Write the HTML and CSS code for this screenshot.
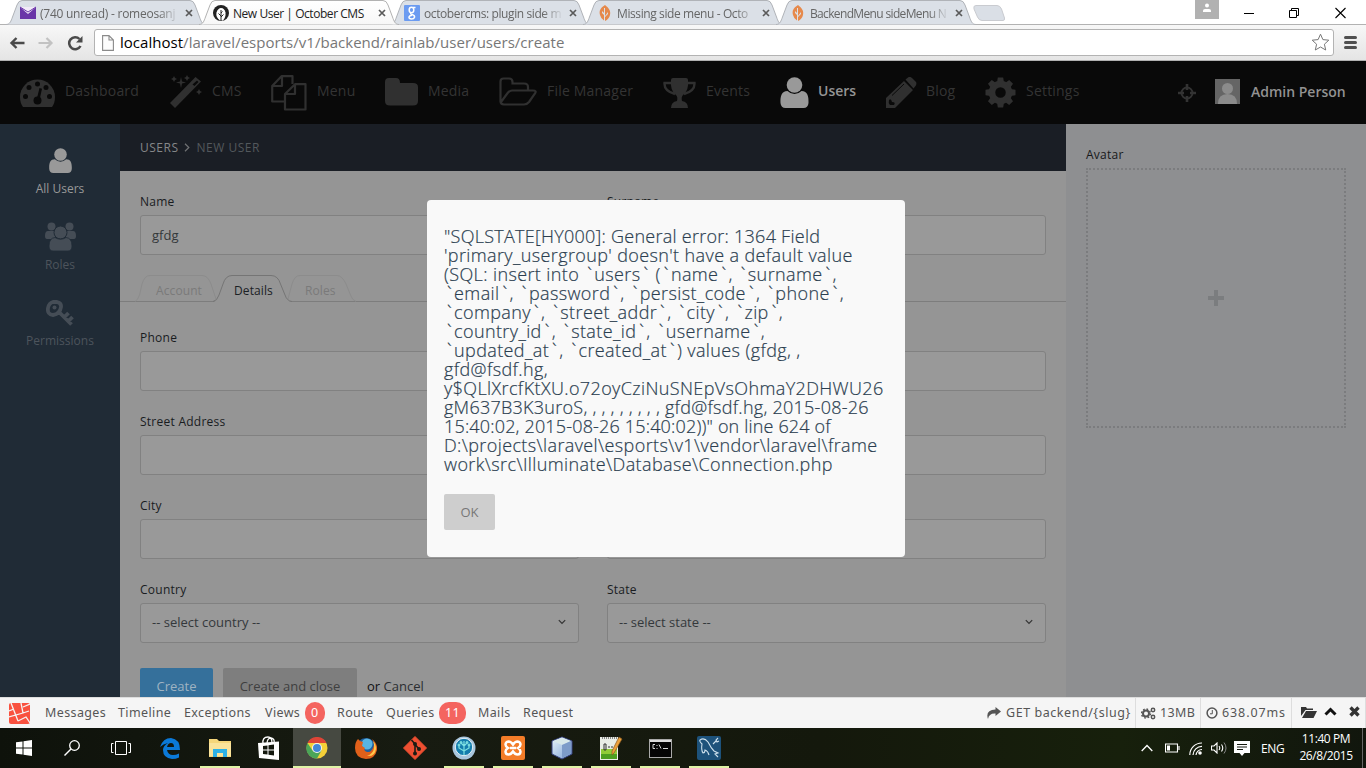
FILE: index.html
```html
<!DOCTYPE html>
<html lang="en">
<head>
<meta charset="utf-8">
<title>New User | October CMS</title>
<link rel="stylesheet" href="styles.css">
</head>
<body>
<svg class="defs" width="0" height="0">
  <defs>
    <linearGradient id="tabFill" x1="0" y1="0" x2="0" y2="1"><stop offset="0" stop-color="#fff"/><stop offset="1" stop-color="#f7f7f7"/></linearGradient>
    <linearGradient id="cube" x1="0" y1="0" x2="1" y2="1"><stop offset="0" stop-color="#e8f4fb"/><stop offset="1" stop-color="#7ba0d4"/></linearGradient>
    <symbol id="tabshape" viewBox="0 0 200 25"><path d="M0 24.5C4 24.5 5 21 6.500 17L11 5Q12.500 .5 16 .5H184Q187.500 .5 189 5L193.500 17C195 21 196 24.500 200 24.500"/></symbol>
    <symbol id="user" viewBox="0 0 28 31"><circle cx="14" cy="8" r="7.800"/><path d="M7 14Q10 17 14 17T21 14C27 14 28.300 19 28 26Q27.500 31 23 31H5Q.5 31 0 26C-.3 19 1 14 7 14Z"/></symbol>
    <symbol id="leaf" viewBox="0 0 12 16"><path d="M6 0C1 3 0 6 1 10Q2 14 5 15.500V10L3 8V6L5 8V3H6V11L9 7V9L6 12V16Q10 14 11 10C12 6 10 3 6 0Z" fill="#e6894b"/></symbol>
    <symbol id="x" viewBox="0 0 8 8"><path d="M1 1L7 7M7 1L1 7" stroke="#5a5a5a" stroke-width="1.700"/></symbol>
    <symbol id="chev" viewBox="0 0 8 6"><path d="M.8 1.200L4 4.400L7.200 1.200" fill="none" stroke="#333" stroke-width="1.200"/></symbol>
  </defs>
</svg>

<header class="tabs">
  <div class="tab"><svg class="shape"><use href="#tabshape"/></svg>
    <svg class="fav" viewBox="0 0 16 12"><path d="M0 0H16V12H0Z" fill="#6a35a8"/><path d="M0 0L8 7L16 0Z" fill="#f2eaf8"/><path d="M0 0L8 5L16 0" fill="none" stroke="#6a35a8"/></svg>
    <span class="title t1">(740 unread) - romeosanj</span><svg class="close"><use href="#x"/></svg></div>
  <div class="tab active"><svg class="shape"><use href="#tabshape"/></svg>
    <svg class="fav" viewBox="0 0 16 16"><circle cx="8" cy="8" r="8" fill="#222"/><path d="M7 15.500Q2.500 12 3.500 7.500Q5 3 8 3Q11.500 3 12.500 7.500Q13 12 10 15.500Z" fill="#fff"/><path d="M8 5V16M8 12L10.500 9.500M8 11L5.500 8.500M8 8L9.500 6.500" stroke="#222" fill="none" stroke-width="1"/></svg>
    <span class="title t2">New User | October CMS</span><svg class="close"><use href="#x"/></svg></div>
  <div class="tab"><svg class="shape"><use href="#tabshape"/></svg>
    <svg class="fav" viewBox="0 0 16 16"><rect width="16" height="16" rx="1" fill="#6b9bf1"/><g fill="none" stroke="#fff" stroke-width="1.500"><ellipse cx="7.500" cy="5" rx="2.300" ry="2.700"/><path d="M9 2.600H11.500M7 8Q6 9 8 9.500Q11 10.500 10.500 12.200Q10 14 7.500 14Q4.800 13.800 5 12Q5.300 10.500 8 10.200"/></g></svg>
    <span class="title t3">octobercms: plugin side m</span><svg class="close"><use href="#x"/></svg></div>
  <div class="tab"><svg class="shape"><use href="#tabshape"/></svg>
    <svg class="fav"><use href="#leaf"/></svg>
    <span class="title t4">Missing side menu - Octo</span><svg class="close"><use href="#x"/></svg></div>
  <div class="tab"><svg class="shape"><use href="#tabshape"/></svg>
    <svg class="fav"><use href="#leaf"/></svg>
    <span class="title t5">BackendMenu sideMenu N</span><svg class="close"><use href="#x"/></svg></div>
  <svg class="newtab" viewBox="0 0 34 17"><path d="M4 .5H25Q28 .5 29.500 4L32.500 13Q33 15.500 31 15.500H10Q7 15.500 5.500 12L2 4Q1 .5 4 .5Z" fill="#dadfe6" stroke="#c9cbd0"/></svg>
  <div class="winctl">
    <svg width="24" height="19"><rect width="24" height="19" fill="#b1b1b1"/><circle cx="12" cy="5.500" r="2" fill="#fff"/><path d="M8 12V10.500Q8 9 10 9H14Q16 9 16 10.500V12Z" fill="#fff"/></svg>
    <svg width="10" height="26"><path d="M0 13.500H10" stroke="#000"/></svg>
    <svg width="11" height="26"><path d="M.5 10.500H7.500V17.500H.5ZM2.500 10V8.500H9.500V15.500H8" fill="none" stroke="#000"/></svg>
    <svg width="11" height="26"><path d="M.5 8L10.500 18M10.500 8L.5 18" stroke="#000" stroke-width="1.100"/></svg>
  </div>
</header>

<div class="toolbar">
  <svg width="16" height="16" viewBox="0 0 16 16"><path d="M7.500 3L2.500 8L7.500 13M2 8H15.500" fill="none" stroke="#4a4a4a" stroke-width="2.400"/></svg>
  <svg width="16" height="16" viewBox="0 0 16 16"><path d="M8.500 3L13.500 8L8.500 13M14 8H.5" fill="none" stroke="#c2c2c2" stroke-width="2.200"/></svg>
  <svg width="16" height="16" viewBox="0 0 16 16"><path d="M13.500 11A6 6 0 1 1 12.500 4" fill="none" stroke="#4a4a4a" stroke-width="2.500"/><path d="M15.500 1V7.500H9Z" fill="#4a4a4a"/></svg>
  <div class="omnibox">
    <svg width="12" height="16" viewBox="0 0 12 16"><path d="M.6 .6H7L11.400 5V15.400H.6ZM7 .6V5H11.400" fill="#fcfcfc" stroke="#8a8a8a" stroke-width="1.100"/></svg>
    <span class="url"><b>localhost</b>/laravel/esports/v1/backend/rainlab/user/users/create</span>
    <svg class="star" width="19" height="19" viewBox="0 0 19 19"><path d="M9.500 1.200L11.900 6.600L17.800 7.200L13.400 11.200L14.700 17L9.500 14L4.300 17L5.600 11.200L1.200 7.200L7.100 6.600Z" fill="#fff" stroke="#777" stroke-linejoin="round"/></svg>
  </div>
  <svg class="burger" width="13" height="13"><path d="M1.500 1.500H11.500M1.500 6.500H11.500M1.500 11.500H11.500" stroke="#505050" stroke-width="3" stroke-linecap="round"/></svg>
</div>

<div class="page">
  <nav class="mainnav">
    <svg width="36" height="36" viewBox="0 0 36 36"><path d="M3 32Q0 28 0 22A17.500 17.500 0 0 1 35 22Q35 28 32 32Z"/><g fill="#090909"><circle cx="5.500" cy="21.500" r="2.500"/><circle cx="9" cy="12.500" r="2.500"/><circle cx="17.500" cy="9" r="2.500"/><circle cx="26" cy="12.500" r="2.500"/><circle cx="29.500" cy="21.500" r="2.500"/><circle cx="17.500" cy="25.500" r="4"/><path d="M19.500 13L22 13.700L19.500 25H16.500Z"/></g></svg>
    <span>Dashboard</span>
    <svg class="up" width="33" height="33" viewBox="0 0 33 33"><path d="M0 28L25.500 2L31 6.500L5 33Z"/><path d="M22.500 9.500L27 5.500L28.500 7L24.500 11Z" fill="#090909"/><path d="M11 2L12 6.500L16 7.500L12 8.500L11 13L10 8.500L6 7.500L10 6.500ZM4 1L5 3L7 4L5 5L4 7L3 5L1 4L3 3ZM17 0L18 2L20 3L18 4L17 6L16 4L14 3L16 2ZM29 14L30 16L32 17L30 18L29 20L28 18L26 17L28 16Z"/></svg>
    <span>CMS</span>
    <svg width="36" height="36" viewBox="0 0 36 36"><g fill="none" stroke="#303030" stroke-width="2.200" stroke-linejoin="round"><path d="M13 26.500H1.200V11L10.500 1.200H21.500V9M11 1.500V11H1.500"/><path d="M14 19L24 9.200H34.500V34.500H14ZM24 9.500V19H14"/></g></svg>
    <span>Menu</span>
    <svg class="up" width="33" height="30" viewBox="0 0 33 30"><path d="M4 1H11Q15 1 15 6H28Q33 6 33 10V24Q33 28.500 28 28.500H5Q0 28.500 0 24V5Q0 1 4 1Z"/></svg>
    <span>Media</span>
    <svg class="up" width="38" height="30" viewBox="0 0 38 30"><path d="M1.500 25V4.500Q1.500 1.500 4.500 1.500H10Q13.500 1.500 13.500 5V6.500H25Q29 6.500 29 10V13.500M2 25L9 15.500Q11 13.500 13 13.500H34Q38 13.500 36 16.500L30 25Q28 27.500 25 27.500H5Q1.500 27.500 1.500 24" fill="none" stroke="#303030" stroke-width="2.200"/></svg>
    <span>File Manager</span>
    <svg width="33" height="32" viewBox="0 0 33 32"><path d="M8 3Q8 1 10 1H23Q25 1 25 3Q26 14 20 18Q18 20 19 24Q25 25 25 31H8Q8 25 14 24Q15 20 13 18Q7 14 8 3Z"/><path d="M8 6H1.500Q1 14 12 17M25 6H31.500Q32 14 21 17" fill="none" stroke="#303030" stroke-width="2.400"/></svg>
    <span>Events</span>
    <svg class="on" width="29" height="31"><use href="#user"/></svg>
    <span class="on">Users</span>
    <svg width="31" height="31" viewBox="0 0 31 31"><path d="M0 31V21L18 4L27 13L9 31ZM19.500 2.500L22 .5Q24 -1 26 1L30 5Q31 7 29.500 9L27.500 11.500Z"/><path d="M6 18.500L18 7" stroke="#090909"/><path d="M3 23Q5 21 6 25Q10 25 8 28H4Q2 26 3 23Z" fill="#090909"/></svg>
    <span>Blog</span>
    <svg width="31" height="31" viewBox="-15.500 -15.500 31 31"><circle r="8.500" fill="none" stroke="#303030" stroke-width="6.500"/><g id="teeth"><path d="M-3.500 -10L-2.700 -15H2.700L3.500 -10ZM-3.500 10L-2.700 15H2.700L3.500 10ZM-10 -3.500L-15 -2.700V2.700L-10 3.500ZM10 -3.500L15 -2.700V2.700L10 3.500Z"/></g><use href="#teeth" transform="rotate(45)"/></svg>
    <span>Settings</span>
    <svg width="18" height="18" viewBox="0 0 18 18"><circle cx="9" cy="9" r="5.500" fill="none" stroke="#333" stroke-width="1.900"/><path d="M9 0V6M9 12V18M0 9H6M12 9H18" stroke="#333" stroke-width="2.600"/></svg>
    <svg class="up" width="25" height="25" viewBox="0 0 25 25"><rect width="25" height="25" fill="#656565"/><circle cx="12.500" cy="9.500" r="5.500" fill="#8b8b8b"/><path d="M3 25Q3 15 12.500 15T22 25Z" fill="#8b8b8b"/></svg>
    <span class="admin">Admin Person</span>
  </nav>
  <div class="columns">
    <aside class="side">
      <div class="sitem on"><svg width="23" height="25"><use href="#user"/></svg><span>All Users</span></div>
      <div class="sitem"><svg width="31" height="29" viewBox="0 0 31 29"><circle cx="6.500" cy="4.500" r="4"/><circle cx="24.500" cy="4.500" r="4"/><path d="M3 9H10V17H2Q0 17 0 14Q0 9 3 9ZM28 9H21V17H29Q31 17 31 14Q31 9 28 9Z"/><circle cx="15.500" cy="10.500" r="6.500" stroke="#202b36"/><path d="M10 15.500Q15.500 19 21 15.500Q27 16 27 24Q27 29 23 29H8Q4 29 4 24Q4 16 10 15.500Z" stroke="#202b36" stroke-width=".8"/></svg><span>Roles</span></div>
      <div class="sitem key"><svg width="28" height="26" viewBox="0 0 28 26"><g fill="none" stroke="#454d56" stroke-width="3.800"><path d="M7 2H11Q15.500 3 15 7Q14 14 7 15Q1 14.500 2 8Q3 3 7 2ZM13 12L25.500 24.500M18.500 17L22.500 13M22.500 21L26.500 17"/></g><circle cx="8.500" cy="7.500" r="2"/></svg><span>Permissions</span></div>
    </aside>
    <main class="main">
      <div class="crumb"><span>USERS</span><svg width="6" height="9" viewBox="0 0 6 9"><path d="M1 .8L4.800 4.500L1 8.200" fill="none" stroke="#707274" stroke-width="1.200"/></svg><em>NEW USER</em></div>
      <div class="row first">
        <div class="field"><label>Name</label><div class="input">gfdg</div></div>
        <div class="field"><label>Surname</label><div class="input"></div></div>
      </div>
      <div class="ftabs">
        <svg width="330" height="27" viewBox="0 0 330 27"><g fill="none" stroke="#8c8c8c"><path d="M15 26.500Q18 25 19.500 20L22 9Q24.500 .5 30 .5H82Q88 .5 91 9L96 24"/><path d="M168 24L172 9Q174.500 .5 180 .5H217Q222 .5 226 9L230.500 20Q232 25 236 26.500"/></g></svg>
        <svg class="curve" width="80" height="27" viewBox="0 0 80 27"><path d="M0 27Q4 26.500 6 20L10 9Q12.500 .5 19 .5H58Q65 .5 67.500 9L72 20Q74 26.500 79 27Z" fill="#959595"/><path d="M0 26.500Q4 26 6 20L10 9Q12.500 .5 19 .5H58Q65 .5 67.500 9L72 20Q74 26 79 26.500" fill="none" stroke="#757575"/></svg>
        <div class="ftexts"><span>Account</span><span class="cur">Details</span><span>Roles</span></div>
      </div>
      <div class="rows">
        <div class="row"><div class="field"><label>Phone</label><div class="input"></div></div><div class="field"><div class="gap"></div><div class="input"></div></div></div>
        <div class="row"><div class="field"><label>Street Address</label><div class="input"></div></div><div class="field"><div class="gap"></div><div class="input"></div></div></div>
        <div class="row"><div class="field"><label>City</label><div class="input"></div></div><div class="field"><div class="gap"></div><div class="input"></div></div></div>
        <div class="row"><div class="field"><label>Country</label><div class="input select">-- select country --<svg width="8" height="6"><use href="#chev"/></svg></div></div><div class="field"><label>State</label><div class="input select">-- select state --<svg width="8" height="6"><use href="#chev"/></svg></div></div></div>
      </div>
      <div class="actions"><button class="btn blue">Create</button><button class="btn grey">Create and close</button><span><i>or</i> Cancel</span></div>
    </main>
    <aside class="right"><label>Avatar</label><div class="drop"><svg width="18" height="18"><path d="M9 1V17M1 9H17" stroke="#7b7d7f" stroke-width="4"/></svg></div></aside>
  </div>

  <div class="modal">
    <p><span class="s2">"SQLSTATE[HY000]: General error: 1364 Field</span><br>'primary_usergroup' doesn't have a default value<br>(SQL: insert into <q>users</q> (<q>name</q>, <q>surname</q>,<br><q>email</q>, <q>password</q>, <q>persist_code</q>, <q>phone</q>,<br><q>company</q>, <q>street_addr</q>, <q>city</q>, <q>zip</q>,<br><q>country_id</q>, <q>state_id</q>, <q>username</q>,<br><q>updated_at</q>, <q>created_at</q>) values (gfdg, ,<br>gfd@fsdf.hg,<br>y$QLlXrcfKtXU.o72oyCziNuSNEpVsOhmaY2DHWU26<br><span class="s2">gM637B3K3uroS, , , , , , , , , gfd@fsdf.hg, 2015-08-26</span><br><span class="s1">15:40:02, 2015-08-26 15:40:02))" on line 624 of</span><br>D:\projects\laravel\esports\v1\vendor\laravel\frame<br>work\src\Illuminate\Database\Connection.php</p>
    <button class="ok">OK</button>
  </div>
</div>

<div class="debugbar">
  <svg width="21" height="21" viewBox="0 0 21 21"><rect width="21" height="21" rx="2" fill="#f9513f"/><path d="M2 0L9 18M0 14L14 10L20 8M0 8L5 6M12 0L14 10M14 4L21 1M9 18L17 14L21 20" fill="none" stroke="#f5f5f5" stroke-width="1.300"/></svg>
  <span>Messages</span><span>Timeline</span><span>Exceptions</span><span>Views</span><b>0</b><span>Route</span><span>Queries</span><b>11</b><span>Mails</span><span>Request</span>
  <div class="dbright">
    <div class="cell c1"><svg width="14" height="12" viewBox="0 0 14 12"><path d="M8.500 0L14 4.500L8.500 9V6.500Q2 6 1 12Q-2 3 8.500 2.500Z" fill="#555"/></svg><span>GET backend/{slug}</span></div>
    <div class="cell c2"><svg width="15" height="13" viewBox="0 0 15 13"><g fill="none" stroke="#555"><circle cx="5" cy="6.500" r="3" stroke-width="2"/><circle cx="5" cy="6.500" r="4.500" stroke-width="1.400" stroke-dasharray="1.700 1.830"/><circle cx="12" cy="3" r="1.700" stroke-width="1.500"/><circle cx="12" cy="10" r="1.700" stroke-width="1.500"/></g></svg><span>13MB</span></div>
    <div class="cell c3"><svg width="12" height="12" viewBox="0 0 12 12"><circle cx="6" cy="6" r="4.900" fill="none" stroke="#555" stroke-width="1.500"/><path d="M6.300 3V6.800H4" fill="none" stroke="#555"/></svg><span>638.07ms</span></div>
    <div class="cell c4"><svg width="16" height="12" viewBox="0 0 16 12"><path d="M0 10V1H5L6 2.500H12V4H4.500ZM1 12L5 5H16L12.500 12Z" fill="#333"/></svg><svg width="13" height="9" viewBox="0 0 13 9"><path d="M1.500 7.500L6.500 2.500L11.500 7.500" fill="none" stroke="#111" stroke-width="3"/></svg><svg width="11" height="11" viewBox="0 0 11 11"><path d="M1.500 1.500L9.500 9.500M9.500 1.500L1.500 9.500" stroke="#333" stroke-width="3.400"/></svg></div>
  </div>
</div>

<footer class="taskbar">
  <div class="apps">
    <div><svg width="16" height="16" viewBox="0 0 16 16"><path d="M0 2.300L6.500 1.400V7.500H0ZM7.500 1.200L16 0V7.500H7.500ZM0 8.500H6.500V14.600L0 13.700ZM7.500 8.500H16V16L7.500 14.800Z" fill="#fff"/></svg></div>
    <div><svg width="16" height="16" viewBox="0 0 16 16"><circle cx="10.500" cy="5.500" r="4.800" fill="none" stroke="#fff" stroke-width="1.300"/><path d="M7 9L.5 15.500" stroke="#fff" stroke-width="1.400"/></svg></div>
    <div><svg width="20" height="14" viewBox="0 0 20 14"><path d="M4.500 .5H15.500V13.500H4.500ZM2.500 2.500H.5V11.500H2.500M17.500 2.500H19.500V11.500H17.500" fill="none" stroke="#fff"/></svg></div>
    <div><svg width="20" height="21" viewBox="0 0 20 21"><path d="M0 9Q3 0 11 0Q20 1 20 12H7Q8 17 13 17Q16 17 19 15.500V19.500Q16 21 12 21Q3 20 3 12Q3 8 8 5Q3 6 0 9ZM7 9H14Q14 5 11 5Q8 5 7 9Z" fill="#0b79d8"/></svg></div>
    <div class="open"><svg width="22" height="18" viewBox="0 0 22 18"><path d="M0 0H8L10 2H22V18H0Z" fill="#f5d67a"/><path d="M0 4H22V17H0Z" fill="#fae39a"/><path d="M4 18V10H18V18H14V14H8V18Z" fill="#2cb1e6"/></svg></div>
    <div><svg width="22" height="24" viewBox="0 0 22 24"><path d="M5 8Q4 1 10 1Q14 1 14 7M9 8Q9 2 13 2Q17 3 16 7" fill="none" stroke="#fff" stroke-width="1.300"/><path d="M0 7L21 5.500V24L1 22Z" fill="#fff"/><path d="M5 10L9.500 9.500V13.500H5ZM10.500 9.300L16 8.500V13.500H10.500ZM5 14.500H9.500V18.500L5 18ZM10.500 14.500H16V19.500L10.500 18.700Z" fill="#14180e"/></svg></div>
    <div class="cur"><svg width="22" height="22" viewBox="-11 -11 22 22"><circle r="10.500" fill="#f4cf38"/><path d="M-9.500 -5A10.500 10.500 0 0 1 9.500 -5H0Z" fill="#de4437"/><path d="M-9.500 -5A10.500 10.500 0 0 0 0 10.500L4.500 2.500L-4.500 2.500Z" fill="#4ba558"/><circle r="5" fill="#f4f4f4"/><circle r="4" fill="#4387d6"/></svg></div>
    <div><svg width="22" height="22" viewBox="0 0 22 22"><circle cx="11" cy="11" r="10" fill="#1d5f9f"/><circle cx="12" cy="7" r="5.500" fill="#58b4e2"/><path d="M3 2Q5 5 8 5L7 9L10 11Q8 14 12 15Q17 16 19 8Q19 4 17 2Q23 7 22 13Q20 22 11 22Q0 21 0 11Q0 5 3 2Z" fill="#e0601a"/><path d="M18 4Q22 15 12 19Q20 20 21 12Q21 7 18 4Z" fill="#ffc84a"/></svg></div>
    <div><svg width="24" height="24" viewBox="0 0 24 24"><path d="M12 .5L23.500 12L12 23.500L.5 12Z" fill="#ee4f31" stroke="#ee4f31" stroke-linejoin="round"/><path d="M8.500 4L12 8V18M12 8.500L16 13" stroke="#1c1c14" stroke-width="1.600" fill="none"/><circle cx="12" cy="8" r="2" fill="#1c1c14"/><circle cx="12" cy="17.500" r="2" fill="#1c1c14"/><circle cx="16" cy="13" r="2" fill="#1c1c14"/></svg></div>
    <div class="open"><svg width="24" height="24" viewBox="0 0 24 24"><circle cx="12" cy="12" r="11.500" fill="#a9c6dd"/><circle cx="12" cy="11" r="8.700" fill="#147dad" stroke="#e5f0f6"/><g stroke="#7ce0e2" fill="#7ce0e2"><path d="M12 19V5M12 15L7 12V9M12 15L17 12V9M12 10L9 7M12 10L15 7" fill="none" stroke-width="1.200"/><circle cx="7" cy="9" r="1"/><circle cx="17" cy="9" r="1"/><circle cx="9" cy="6.500" r="1"/><circle cx="15" cy="6.500" r="1"/></g></svg></div>
    <div class="open"><svg width="24" height="24" viewBox="0 0 24 24"><rect width="24" height="24" rx="2" fill="#f37c28"/><g fill="none" stroke="#fff" stroke-width="2.500"><path d="M12 8.500Q10 5.500 7.500 5.500Q4.500 6 4.500 8.500Q4.500 10.500 7 12Q4.500 13.500 4.500 15.500Q4.500 18.500 7.500 18.500Q10 18.500 12 15.500Q14 18.500 16.500 18.500Q19.500 18.500 19.500 15.500Q19.500 13.500 17 12Q19.500 10.500 19.500 8.500Q19.500 6 16.500 5.500Q14 5.500 12 8.500Z"/><path d="M9 12H15"/></g></svg></div>
    <div class="open"><svg width="22" height="24" viewBox="0 0 22 24"><path d="M11 1L21 5V18L11 23L1 18V5Z" fill="url(#cube)" stroke="#34417f"/><path d="M2 5L11 9L20 5L11 1.500Z" fill="#d8e8ea"/><path d="M11 9V22L20 17.500V5Z" fill="#7d9cc9"/></svg></div>
    <div class="open"><svg width="24" height="24" viewBox="0 0 24 24"><path d="M1 1H19V24H1Z" fill="#e9ede6"/><path d="M2 13H18V23H2Z" fill="#91cc38"/><path d="M2 18H18V23H2Z" fill="#4d9f20"/><path d="M3 2H18" stroke="#888" stroke-dasharray="1 1" stroke-width="2"/><path d="M5 8V14H7V8ZM9 11H11M12 11H14" fill="none" stroke="#333"/><path d="M20 1L23 3L15 17L13 19V15Z" fill="#eca03b" stroke="#87591f" stroke-width=".7"/></svg></div>
    <div class="open"><svg width="23" height="19" viewBox="0 0 23 19"><rect x=".5" y=".5" width="22" height="18" fill="#050505" stroke="#a9a9a9"/><path d="M1 2H22" stroke="#ddd" stroke-width="2"/><path d="M6 5.500H4V9.500H6M8 6V7M8 9V10M10 5.500L12 9.500M14 9.500H19" fill="none" stroke="#d7d7d7"/></svg></div>
    <div class="open"><svg width="24" height="24" viewBox="0 0 24 24"><rect width="24" height="24" rx="2" fill="#1d527b"/><path d="M3 4Q7 1 11 6Q14 12 17 15L21 17L18 18L21 21M3 4Q2 5 5 8Q4 14 6 17Q8 17 8 14Q11 15 12 19M21 2L19 4L20 6L22 5M19 5L16 8" fill="none" stroke="#cde0ec" stroke-width="1.100"/></svg></div>
  </div>
  <div class="tray">
    <svg width="12" height="8" viewBox="0 0 12 8"><path d="M.7 7L6 1.500L11.300 7" fill="none" stroke="#fff" stroke-width="1.300"/></svg>
    <svg width="15" height="10" viewBox="0 0 15 10"><path d="M.5 1H12.500V9H.5ZM14 3V7" fill="none" stroke="#fff" stroke-width="1.100"/><rect x="2" y="2.500" width="3" height="5" fill="#fff"/></svg>
    <svg width="13" height="13" viewBox="0 0 13 13"><path d="M.8 13A12 12 0 0 1 13 1M4 13A9 9 0 0 1 13 4.300M7 13A6 6 0 0 1 13 7.500" fill="none" stroke="#fff" stroke-width="1.200"/><circle cx="11" cy="11" r="1.800" fill="#fff"/></svg>
    <svg width="17" height="12" viewBox="0 0 17 12"><path d="M.5 4H3L6 1V11L3 8H.5ZM8 4Q9.500 6 8 8M10.500 2.500Q13 6 10.500 9.500" fill="none" stroke="#fff" stroke-width="1.100"/><path d="M13 .5Q17 6 13 11.500" fill="none" stroke="#888"/></svg>
    <svg width="16" height="15" viewBox="0 0 16 15"><path d="M0 0H16V12H10.500L8 15L5.500 12H0Z" fill="#fff"/><path d="M3 3.500H13M3 6H13M3 8.500H9" stroke="#15190e"/></svg>
    <span class="lang">ENG</span>
    <div class="clock">11:40 PM<br>26/8/2015</div>
  </div>
</footer>
</body>
</html>
```
FILE: styles.css
```css
* { box-sizing: border-box; }
html, body { margin: 0; width: 1366px; height: 768px; overflow: hidden; }
body { display: flex; flex-direction: column; font-family: "Open Sans", sans-serif; font-size: 13px; background: #fff; }
svg { display: block; flex: none; }
.defs { position: absolute; }
button { font: inherit; border: 0; padding: 0; }

/* Browser chrome */
.tabs { height: 25px; flex: none; display: flex; padding-left: 6px; position: relative; z-index: 1; }
.tab { width: 200px; height: 25px; flex: none; position: relative; display: flex; align-items: center; padding: 1px 12px 0 14px; margin-right: -7px; color: #666; font-size: 12px; }
.tab.active { z-index: 2; color: #222; margin-right: -9px; }
.shape { position: absolute; left: 0; top: 0; width: 200px; height: 25px; fill: #dbe0e7; stroke: #b0b3b8; }
.active .shape { fill: url(#tabFill); stroke: #b2b2b2; }
.fav { position: relative; width: 16px; height: 16px; }
.title { position: relative; margin-left: 4px; width: 138px; white-space: nowrap; overflow: hidden; -webkit-mask-image: linear-gradient(90deg, #000 86%, transparent 101%); }
.active .title { -webkit-mask-image: none; }
.t1 { letter-spacing: -0.25px; }
.t2 { letter-spacing: -0.45px; }
.t3, .t4 { letter-spacing: -0.4px; }
.t5 { letter-spacing: -0.65px; }
.close { position: relative; width: 8px; height: 8px; margin-left: 7px; }
.newtab { width: 34px; height: 17px; margin: 5px 0 0 3px; }
.winctl { position: absolute; right: 20px; top: 0; display: grid; grid-template-columns: 49px 45px 46px 11px; }
.toolbar { flex: none; display: flex; align-items: center; padding: 0 9px 0 9px; background: linear-gradient(#f7f7f7, #e5e5e5); border-top: 1px solid #b2b2b2; border-bottom: 1px solid #b0b0b0; margin-top: -1px; height: 37px; gap: 13px; }
.omnibox { flex: 1; height: 27px; margin-left: -2px; border: 1px solid #b3b3b3; border-radius: 3px; background: #fff; display: flex; align-items: center; padding: 0 3px 0 7px; }
.url { margin-left: 6px; margin-top: -1px; font-size: 15px; color: #777; letter-spacing: .03px; flex: 1; white-space: nowrap; }
.url b { font-weight: 400; color: #000; }
.burger { margin-left: -3px; }

/* October backend */
.page { height: 636px; flex: none; position: relative; overflow: hidden; display: flex; flex-direction: column; }
.mainnav { height: 63px; flex: none; background: #090909; display: grid; align-items: center; padding-left: 20px; grid-template-columns: 45px 105px 42px 59px 46px 68px 43px 71px 48px 116px 43px 74px 38px 68px 40px 59px 41px 152px 37px 35px 110px; color: #343434; fill: #303030; font-size: 14px; letter-spacing: .2px; white-space: nowrap; }
.mainnav span { margin-top: -4px; }
.mainnav .up { margin-top: -2px; }
.mainnav .on { color: #999; fill: #999; }
.mainnav span.on { font-weight: 600; color: #949494; letter-spacing: 0; }
.mainnav .admin { color: #929292; font-weight: 600; margin-top: -2px; letter-spacing: 0; padding-left: 1px; }
.columns { flex: 1; display: flex; min-height: 0; }
.side { width: 120px; flex: none; background: #202b36; padding-top: 24px; color: #4d545c; fill: #454d56; }
.sitem { height: 76px; display: flex; flex-direction: column; align-items: center; font-size: 12px; }
.sitem span { margin-top: auto; margin-bottom: 26px; line-height: 14px; }
.sitem.on { color: #999; fill: #999; height: 74px; }
.sitem.key svg { margin: 2px 0 -2px; }
.main { width: 946px; flex: none; background: #959595; color: #191c1f; overflow: hidden; }
.crumb { height: 47px; background: #1a1e25; display: flex; align-items: center; padding-left: 20px; gap: 6px; color: #858789; font-size: 12px; letter-spacing: .5px; }
.crumb em { font-style: normal; color: #53585c; }
.row { display: flex; gap: 28px; padding: 0 20px; height: 84px; }
.row.first { padding-top: 22px; height: 104px; }
.field { width: 439px; font-size: 12px; }
.field label, .right label { display: block; height: 22px; line-height: 17px; font-weight: 400; letter-spacing: .25px; }
.gap { height: 22px; }
.input { height: 40px; border: 1px solid #818181; border-radius: 3px; background: #999; color: #34383b; display: flex; align-items: center; justify-content: space-between; padding: 0 12px 1px 11px; font-size: 13px; }
.select { padding-bottom: 2px; }
.ftabs { height: 27px; border-bottom: 1px solid #7d7d7d; position: relative; }
.ftabs .curve { position: absolute; left: 93px; top: 0; }
.ftexts { position: absolute; left: 36px; top: 7px; display: grid; grid-template-columns: 78px 71px 60px; font-size: 12px; line-height: 18px; letter-spacing: .1px; color: #7a7a7a; }
.ftexts .cur { color: #1b2125; }
.rows { padding-top: 27px; }
.actions { padding: 3px 20px 0; display: flex; color: #2b2e31; }
.actions i { font-style: normal; color: #111; }
.actions span { margin-left: 10px; line-height: 36px; }
.btn { height: 36px; border-radius: 2px; font-size: 13px; }
.blue { width: 73px; background: #35709b; color: #9fb3c2; }
.grey { width: 134px; margin-left: 10px; background: #7e7e7e; color: #3f3f3f; }
.right { flex: 1; background: #8e8f91; padding: 22px 20px; font-size: 12px; color: #17191b; }
.drop { height: 260px; border: 2px dotted #7b7c7e; display: grid; place-items: center; }
.modal { position: absolute; left: 427px; top: 139px; width: 478px; height: 357px; border-radius: 4px; background: #f9f9f9; padding: 27px 17px; }
.modal p { margin: 0; font-size: 18px; line-height: 19px; font-weight: 300; letter-spacing: .38px; color: #2b3e50; -webkit-text-stroke: .2px #2b3e50; white-space: nowrap; }
.modal .s2 { letter-spacing: .26px; }
.modal .s1 { letter-spacing: .17px; }
.modal q { quotes: none; }
.modal q::before, .modal q::after { content: "`"; padding: 0 2px 0 3px; }
.ok { display: block; margin-top: 20px; width: 51px; height: 36px; border-radius: 2px; background: #cecece; color: #777; font-size: 13px; }

/* Debug bar */
.debugbar { height: 31px; flex: none; background: #f5f5f5; border-top: 1px solid #ddd; display: grid; align-items: center; padding-left: 9px; grid-template-columns: 36px 73px 66px 81px 40px 32px 49px 53px 39px 45px 60px 1fr; font-family: "Noto Sans", sans-serif; font-size: 12.500px; letter-spacing: .38px; color: #555; white-space: nowrap; }
.debugbar span { margin-top: -2px; }
.debugbar > b { justify-self: start; background: #f4645f; color: #fff; font-weight: 400; height: 22px; line-height: 21px; border-radius: 10px; padding: 0 6px; }
.dbright { justify-self: end; display: flex; height: 30px; }
.cell { display: flex; align-items: center; border-right: 1px solid #ddd; }
.c1 { width: 149px; gap: 5px; letter-spacing: .55px; }
.c2 { width: 65px; padding-left: 5px; gap: 4px; }
.c3 { width: 91px; padding-left: 5px; gap: 4px; letter-spacing: .9px; }
.c4 { width: 74px; padding: 0 5px 3px 9px; gap: 7px; }
.c4 svg:last-child { margin-left: auto; }

/* Windows taskbar */
.taskbar { height: 40px; flex: none; background: linear-gradient(90deg, #0e120b, #171b11 30%, #14180c 60%, #17200c 82%, #11160d); display: flex; justify-content: space-between; color: #fff; }
.apps { display: grid; grid-template-columns: 48px 48px 49px 50px repeat(2, 49px) 48px repeat(8, 49px); }
.apps div { display: grid; place-items: center; }
.apps .open { box-shadow: inset 0 -2px #dff3a6; margin: 0 4px 0 5px; }
.apps .cur { background: #464941; box-shadow: inset 0 -2px #dff3a6; }
.tray { width: 225px; display: grid; grid-template-columns: 24px 24px 22px 23px 27px 26px 79px; align-items: center; }
.lang { font-size: 12px; letter-spacing: -.4px; }
.clock { font-size: 12px; line-height: 17px; letter-spacing: -.4px; text-align: center; border-right: 1px solid #666; padding-left: 3px; width: 76px; height: 40px; padding-top: 2px; }
```
